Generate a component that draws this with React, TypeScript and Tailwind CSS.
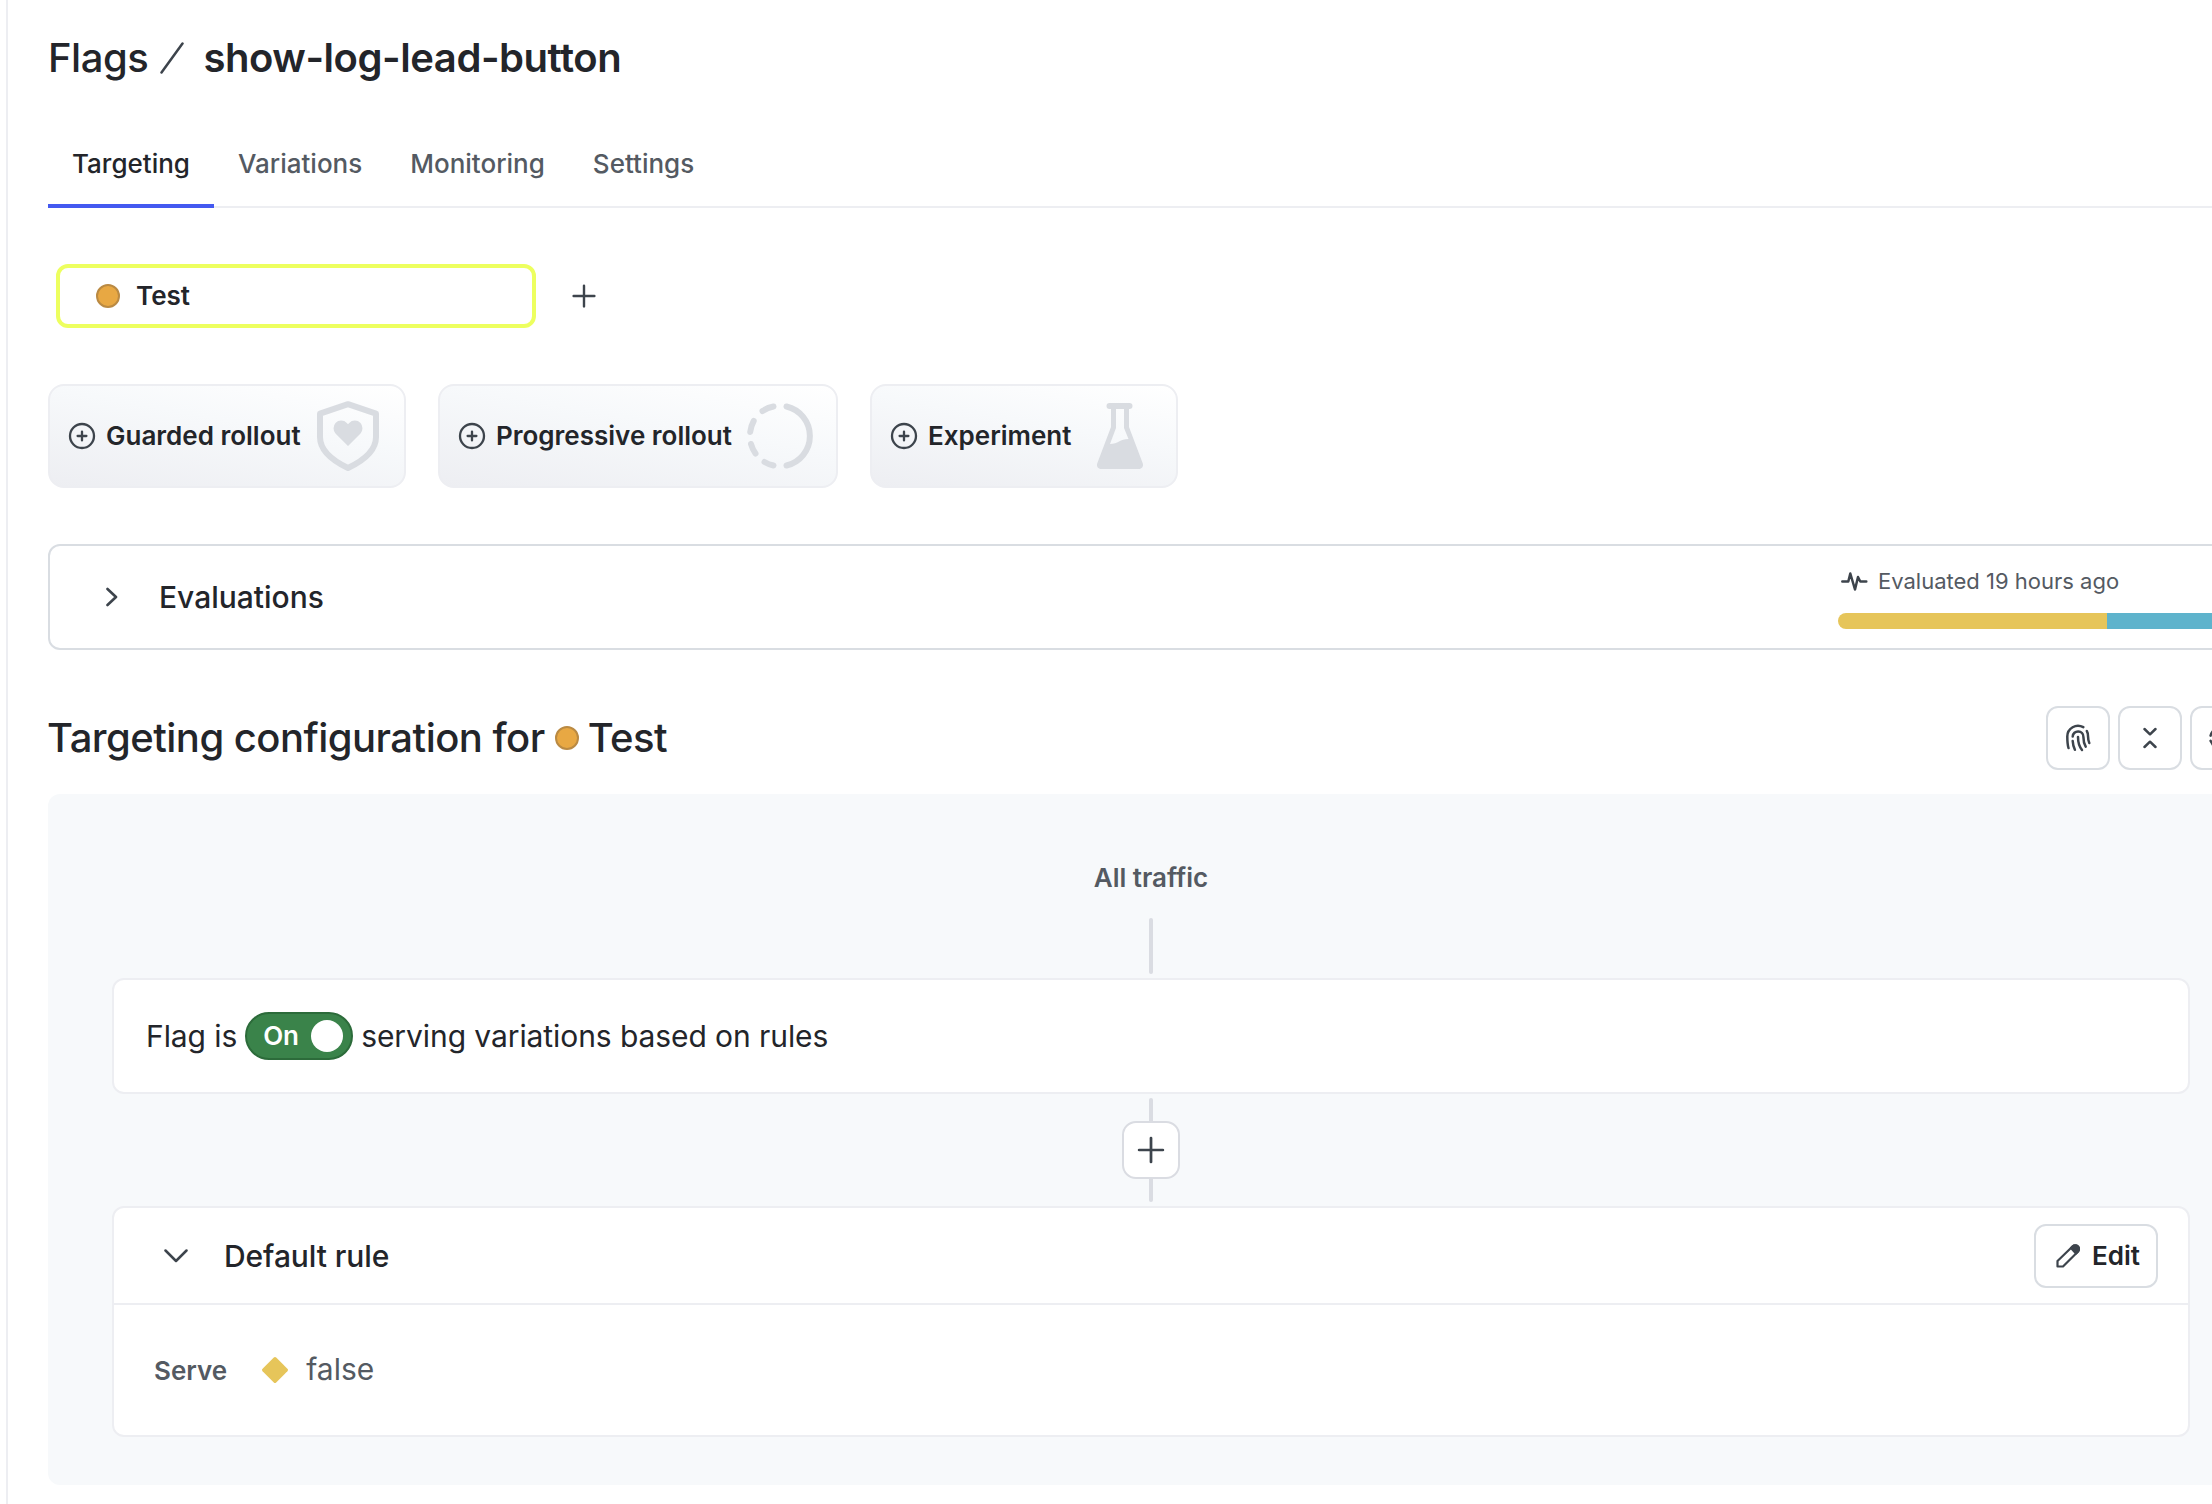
import React from "react";

const INK = "#3d444c";

function Dot({ className = "" }: { className?: string }) {
  return <span className={`block h-6 w-6 shrink-0 rounded-full border-2 border-[#ba8a43] bg-[#e8a843] ${className}`} />;
}

function PlusCircle() {
  return (
    <svg width="28" height="28" viewBox="0 0 28 28" fill="none" stroke={INK} strokeWidth="2.3" strokeLinecap="round" className="shrink-0">
      <circle cx="14" cy="14" r="12" />
      <path d="M14 9.6v8.800M9.600 14h8.800" />
    </svg>
  );
}

function Plus({ size, stroke }: { size: number; stroke: number }) {
  return (
    <svg width={size} height={size} viewBox="0 0 28 28" fill="none" stroke={INK} strokeWidth={stroke} strokeLinecap="round">
      <path d="M14 3.600v20.800M3.600 14h20.800" />
    </svg>
  );
}

function ShieldHeart() {
  return (
    <svg width="62" height="70" viewBox="0 0 62 70" className="shrink-0">
      <path d="M31 3.200 59 12.700v23.300c0 12-9 22-28 31C12 58 3 48 3 36V12.700Z" fill="none" stroke="#d9dce1" strokeWidth="6" strokeLinejoin="round" />
      <path d="M31 45 18.500 32.500a8 8 0 0 1 0-10.500 7.800 7.800 0 0 1 11.300 0L31 23.200l1.200-1.200a7.800 7.800 0 0 1 11.300 0 8 8 0 0 1 0 10.500Z" fill="#d9dce1" />
    </svg>
  );
}

function ProgressRing() {
  return (
    <svg width="66" height="66" viewBox="0 0 66 66" fill="none" stroke="#d9dce1" strokeWidth="6" strokeLinecap="round" className="shrink-0">
      <path d="M39.500 3.500a30.300 30.300 0 0 1 0 59" />
      <path d="M26.500 3.500A30 30 0 0 0 15.500 8M6.700 18A30 30 0 0 0 3.200 29M4 41A30 30 0 0 0 8.500 50.500M17.500 59a30 30 0 0 0 9 3.500" />
    </svg>
  );
}

function Flask() {
  return (
    <svg width="48" height="66" viewBox="0 0 48 66" className="shrink-0">
      <path d="M13.500 0h20a3 3 0 0 1 0 6H33v18l13.800 36.500c.9 3-1 5.500-4 5.500H5.200c-3 0-4.900-2.500-4-5.500L15 24V6h-1.500a3 3 0 0 1 0-6ZM20 6v19l-6 16c8 0 10-5 18.500-5L28 25V6Z" fill="#d9dce1" fillRule="evenodd" />
    </svg>
  );
}

function Fingerprint() {
  return (
    <svg width="30" height="30" viewBox="0 0 30 30" fill="none" stroke={INK} strokeWidth="2.500" strokeLinecap="round">
      <path d="M5.500 25C4.600 22 4.300 19 4.300 13.500A10.700 10.700 0 0 1 20.300 4.200" />
      <path d="M9.700 13.500a5.300 5.300 0 0 1 10.700 0.500c0 4 .5 6.500 2.300 9.700" />
      <path d="M15 14c0 5.500.8 9 4 13" />
      <path d="M9.700 18c.2 3.500.8 6 2.200 8.800" />
      <path d="M23.800 8c1 1.500 1.300 3.500 1.300 6 0 2.500.3 4 1.200 6" />
    </svg>
  );
}

function RolloutCard({ label, className, children }: { label: string; className: string; children: React.ReactNode }) {
  return (
    <button className={`flex h-[104px] items-center rounded-2xl border-2 border-[#edeef2] bg-[linear-gradient(10deg,#edeef2,#f7f9fb_60%,#ffffff)] pl-[18px] ${className}`}>
      <PlusCircle />
      <span className="ml-2.5 -mt-0.5 whitespace-nowrap text-[26px] font-semibold">{label}</span>
      {children}
    </button>
  );
}

function IconButton({ children }: { children?: React.ReactNode }) {
  return (
    <button className="flex h-16 w-16 shrink-0 items-center justify-center rounded-xl border-2 border-[#d9dde2] bg-white">{children}</button>
  );
}

export default function App() {
  return (
    <div className="flex h-[1504px] w-[2212px] overflow-hidden bg-white font-['Inter',sans-serif] text-[#23252a]">
      <div className="ml-1.5 w-0.5 shrink-0 bg-[#edeef2]" />
      <main className="ml-10 flex w-[2300px] shrink-0 flex-col">
        <h1 className="mt-[33px] flex h-[50px] items-center whitespace-nowrap text-[40px] tracking-[-0.45px]">
          <span className="font-medium">Flags</span>
          <svg width="24" height="32" viewBox="0 0 24 32" className="ml-3" fill="none" stroke={INK} strokeWidth="2.500" strokeLinecap="round">
            <path d="M1.500 30.500 22.500 1.500" />
          </svg>
          <span className="ml-[19px] font-semibold">show-log-lead-button</span>
        </h1>

        <nav className="mt-[45px] flex h-20 border-b-2 border-[#edeef2] text-[26px] font-medium text-[#545a62]">
          <span className="-mb-0.5 flex h-20 w-[166px] justify-center border-b-4 border-[#4459f0] pt-4 text-[#23252a]">Targeting</span>
          <span className="px-6 pt-4">Variations</span>
          <span className="px-6 pt-4">Monitoring</span>
          <span className="px-6 pt-4">Settings</span>
        </nav>

        <div className="mt-14 flex items-center">
          <div className="ml-2 flex h-16 w-[480px] items-center rounded-xl border-4 border-[#edff5f] pl-9">
            <Dot />
            <span className="ml-4 -mt-0.5 text-[26px] font-semibold">Test</span>
          </div>
          <div className="ml-[34px]"><Plus size={28} stroke={2.4} /></div>
        </div>

        <div className="mt-14 flex gap-8">
          <RolloutCard label="Guarded rollout" className="w-[358px]"><span className="ml-auto mr-[25px]"><ShieldHeart /></span></RolloutCard>
          <RolloutCard label="Progressive rollout" className="w-[400px]"><span className="ml-auto mr-[23px]"><ProgressRing /></span></RolloutCard>
          <RolloutCard label="Experiment" className="w-[308px]"><span className="ml-auto mr-8"><Flask /></span></RolloutCard>
        </div>

        <section className="mt-14 flex h-[106px] items-center rounded-xl border-2 border-[#d9dde2]">
          <svg width="12" height="20" viewBox="0 0 12 20" className="ml-14" fill="none" stroke={INK} strokeWidth="2.600" strokeLinecap="round" strokeLinejoin="round">
            <path d="M1.500 2 10 10l-8.500 8" />
          </svg>
          <span className="ml-[41px] w-[1679px] text-[30px] font-medium">Evaluations</span>
          <div className="flex flex-1 flex-col">
            <div className="flex h-8 items-center gap-[10px] pl-0.5 text-[22px] text-[#545a62]">
              <svg width="28" height="22" viewBox="0 0 28 22" fill="none" stroke={INK} strokeWidth="2.500" strokeLinecap="round" strokeLinejoin="round">
                <path d="M2.300 11.500h6l2-8 4.700 16 3-12.500 2.300 4.500h6" />
              </svg>
              <span className="whitespace-nowrap">Evaluated 19 hours ago</span>
            </div>
            <div className="mt-4 flex h-4 overflow-hidden rounded-l-full">
              <div className="w-[269px] bg-[#e6c55a]" />
              <div className="flex-1 bg-[#5eb3cc]" />
            </div>
          </div>
        </section>

        <div className="mt-14 flex h-16 items-center">
          <h2 className="flex w-[1998px] items-center whitespace-nowrap text-[40px] font-medium tracking-[-0.53px]">
            <span className="-ml-px">Targeting configuration for</span>
            <Dot className="ml-[10px] mr-[9px]" />
            Test
          </h2>
          <div className="flex gap-2">
            <IconButton>
              <Fingerprint />
            </IconButton>
            <IconButton>
              <svg width="14" height="24" viewBox="0 0 14 24" fill="none" stroke={INK} strokeWidth="2.500" strokeLinecap="round" strokeLinejoin="round">
                <path d="M1.500 3 7 8.300 12.500 3M1.500 21 7 15.700l5.500 5.300" />
              </svg>
            </IconButton>
            <IconButton>
              <svg width="26" height="26" viewBox="0 0 26 26" fill="none" stroke={INK} strokeWidth="2.500" strokeLinecap="round">
                <path d="M1.600 10.600A12 12 0 0 1 22 6M24.400 15.600A12 12 0 0 1 4 20M1.600 15.800 4 20" />
              </svg>
            </IconButton>
          </div>
        </div>

        <section className="mt-6 flex h-[691px] flex-col rounded-xl bg-[#f7f9fb] pl-16">
          <div className="flex w-[2078px] flex-col items-center">
            <div className="mt-[68px] h-8 text-[26px] font-semibold leading-8 text-[#545a62]">All traffic</div>
            <div className="mt-6 h-14 w-1 rounded-full bg-[#dadce2]" />
            <div className="mt-1 flex h-[116px] w-full items-center rounded-xl border-2 border-[#edeef2] bg-white pl-8 text-[30px] tracking-[-0.08px]">
              <span>Flag is</span>
              <span className="mx-2 flex h-12 w-[108px] items-center rounded-full border-2 border-[#2c6b3a] bg-[#3a834a] pl-4 text-[26px] font-semibold text-white">
                <span className="-mt-0.5">On</span>
                <span className="ml-auto mr-2 h-8 w-8 rounded-full bg-white" />
              </span>
              <span>serving variations based on rules</span>
            </div>
            <div className="mt-1 h-[23px] w-1 rounded-t-full bg-[#dadce2]" />
            <button className="flex h-[58px] w-[58px] items-center justify-center rounded-[14px] border-2 border-[#dadce2] bg-white">
              <Plus size={32} stroke={2.4} />
            </button>
            <div className="mb-1 h-[23px] w-1 rounded-b-full bg-[#dadce2]" />
            <div className="flex h-[231px] w-full flex-col rounded-xl border-2 border-[#edeef2] bg-white">
              <div className="flex h-[97px] items-center border-b-2 border-[#edeef2] pl-[50px]">
                <svg width="24" height="14" viewBox="0 0 24 14" fill="none" stroke={INK} strokeWidth="2.500" strokeLinecap="round" strokeLinejoin="round">
                  <path d="M1.500 1.500 12 12 22.500 1.500" />
                </svg>
                <span className="ml-9 mt-0.5 text-[30px] font-medium tracking-[-0.08px]">Default rule</span>
                <button className="ml-auto mr-[30px] flex h-16 w-[124px] items-center rounded-xl border-2 border-[#d9dde2] pl-5 text-[26px] font-semibold">
                  <svg width="24" height="24" viewBox="0 0 24 24" fill="none" stroke={INK} strokeWidth="2.200" strokeLinejoin="round">
                    <path d="M1.500 22.500V17L16.500 2.500a3.700 3.700 0 0 1 5.300 5.300L7 22.500Z" />
                    <path d="M15 4l1.700-1.700a3.700 3.700 0 0 1 5.200 5.300L20 9.500Z" fill={INK} />
                  </svg>
                  <span className="ml-3">Edit</span>
                </button>
              </div>
              <div className="flex flex-1 items-center pl-10 text-[#545a62]">
                <span className="text-[26px] font-semibold">Serve</span>
                <svg width="26" height="26" viewBox="0 0 26 26" className="ml-[35px]" fill="#e6c55a">
                  <path d="M11.800.6a1.700 1.700 0 0 1 2.400 0l11.200 11.200a1.700 1.700 0 0 1 0 2.400L14.200 25.400a1.700 1.700 0 0 1-2.400 0L.6 14.200a1.700 1.700 0 0 1 0-2.400Z" />
                </svg>
                <span className="-mt-0.5 ml-[18px] text-[30px]">false</span>
              </div>
            </div>
          </div>
        </section>
      </main>
    </div>
  );
}
